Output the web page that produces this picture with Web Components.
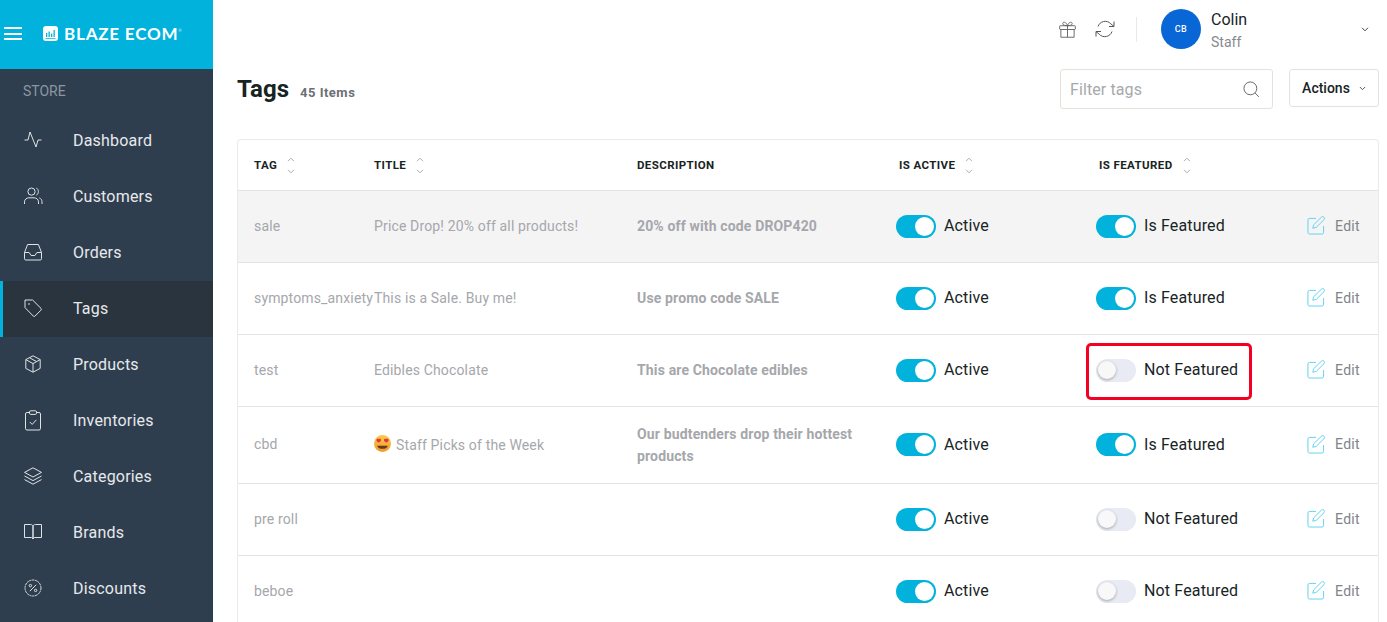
<!DOCTYPE html>
<html lang="en">
<head>
<meta charset="utf-8">
<title>Tags</title>
<style>
  html, body { margin: 0; height: 100%; overflow: hidden; background: #fff; font-family: Roboto, "Liberation Sans", sans-serif; }
</style>
</head>
<body>
<tags-app></tags-app>
<script>
  const ICONS = {
    activity: '<path d="M.5 9H4L6 1l6 15 2-7h3.500"/>',
    users: '<circle cx="7.500" cy="4.600" r="3.600"/><path d="M.5 17v-2.200c0-2.400 2.200-4 4.400-4h5.200c2.200 0 4.400 1.600 4.400 4V17"/><path d="M12.400 1.200c2.600.8 2.600 6 0 6.800M15.400 11c1.400.5 2.600 1.900 2.600 3.700V17"/>',
    inbox: '<path d="M.5 9.500 3.600 1.500h10.800l3.100 8v6.200a1.300 1.300 0 0 1-1.300 1.300H1.800a1.300 1.300 0 0 1-1.300-1.300z"/><path d="M.5 9.500h4.600l2 3h3.800l2-3h4.600"/>',
    tag: '<path d="M1 1h7.600l8.400 8.400a1.200 1.200 0 0 1 0 1.700l-6 6a1.200 1.200 0 0 1-1.700 0L1 8.600z" stroke-linejoin="round"/><circle cx="5" cy="5" r=".4"/>',
    box: '<path d="M9 .8 16.200 4.600v8.800L9 17.200 1.800 13.400V4.600z"/><path d="M1.800 4.600 9 8.600l7.200-4M9 8.600v8.600M5.400 2.700l7.200 3.900"/>',
    clip: '<path d="M5.500 2.500H3A1.500 1.500 0 0 0 1.500 4v14.500A1.500 1.500 0 0 0 3 20h12a1.500 1.500 0 0 0 1.500-1.500V4A1.500 1.500 0 0 0 15 2.500h-2.500"/><rect x="5.500" y=".8" width="7" height="3.600" rx="1.200"/><path d="m5.800 12 2.400 2.400 4.200-4.600"/>',
    layers: '<path d="M9 .8.500 5.400 9 10l8.500-4.600z"/><path d="M.5 9 9 13.600 17.500 9M.5 12.600 9 17.200l8.500-4.600"/>',
    book: '<path d="M.5 1.500h6.200c1.300 0 2.300 1 2.300 2.300V16c0-1-.8-1.500-1.700-1.500H.5zM17.500 1.500h-6.200C10 1.500 9 2.500 9 3.800V16c0-1 .8-1.500 1.700-1.500h6.800z"/>',
    percent: '<circle cx="9" cy="9" r="8" stroke-dasharray="2.200 .6"/><path d="m5.800 12.200 6.400-6.400"/><circle cx="6.400" cy="6.600" r="1.200"/><circle cx="11.600" cy="11.400" r="1.200"/>',
    gift: '<rect x=".7" y="5" width="16.600" height="4" rx=".6"/><path d="M2 9v8.200h14V9M9 5v12.200M9 5C7 5 4 4.600 4 2.800 4 .6 7.600.4 9 5zM9 5c2 0 5-.4 5-2.200C14 .6 10.400.4 9 5z"/>',
    refresh: '<path d="M19 1.500v5h-5M1 16.500v-5h5"/><path d="M3 6.500a7.600 7.600 0 0 1 12.800-2.700L19 6.500M1 11.500l3.200 2.700A7.600 7.600 0 0 0 17 11.500"/>',
    search: '<circle cx="7.800" cy="7.800" r="6.800"/><path d="m12.800 12.800 4 4"/>',
    edit: '<path d="M9.500 2.500H2.800A1.800 1.800 0 0 0 1 4.300v12.900A1.800 1.800 0 0 0 2.800 19h12.900a1.800 1.800 0 0 0 1.800-1.800v-6.700"/><path d="M15.200 1.200a1.900 1.900 0 0 1 2.700 2.700L9.700 12l-3.600.9.900-3.600z"/>'
  };
  const VIEWBOX = { clip: '0 0 18 21', refresh: '0 0 20 18', edit: '0 0 19 20' };

  class UiIcon extends HTMLElement {
    connectedCallback() {
      const name = this.getAttribute('name');
      const root = this.shadowRoot || this.attachShadow({ mode: 'open' });
      root.innerHTML = `
        <style>
          :host { display: inline-flex; flex: none; }
          svg { display: block; width: 100%; height: 100%; fill: none; stroke: currentColor; stroke-width: 1; overflow: visible; }
        </style>
        <svg viewBox="${VIEWBOX[name] || '0 0 18 18'}">${ICONS[name]}</svg>`;
    }
  }
  customElements.define('ui-icon', UiIcon);

  class SideItem extends HTMLElement {
    constructor() {
      super();
      this.attachShadow({ mode: 'open' }).innerHTML = `
        <style>
          :host { display: flex; align-items: center; height: 56px; padding: 0 0 2px 24px; box-sizing: border-box; color: #e6e9ec; font-size: 16px; letter-spacing: .2px; }
          :host([active]) { background: #2a343e; box-shadow: inset 3px 0 0 #00b2dc; }
          ui-icon { width: 18px; height: 18px; margin-right: 31px; color: #dfe3e6; }
          :host([icon="clip"]) ui-icon { height: 21px; }
        </style>
        <ui-icon></ui-icon><slot></slot>`;
    }
    connectedCallback() {
      const icon = this.shadowRoot.querySelector('ui-icon');
      icon.setAttribute('name', this.getAttribute('icon'));
      icon.connectedCallback();
    }
  }
  customElements.define('side-item', SideItem);

  class AppSidebar extends HTMLElement {
    constructor() {
      super();
      this.attachShadow({ mode: 'open' }).innerHTML = `
        <style>
          :host { display: block; width: 213px; flex: none; height: 100vh; background: #2f3e4e; overflow: hidden; }
          .brand { display: flex; align-items: center; height: 69px; background: #00b2dc; color: #fff; padding: 0 0 2px 4px; box-sizing: border-box; }
          .burger { width: 18px; height: 13px; border-top: 2px solid #fff; border-bottom: 2px solid #fff; position: relative; box-sizing: border-box; margin-right: 21px; }
          .burger::after { content: ''; position: absolute; left: 0; right: 0; top: 3.5px; height: 2px; background: #fff; }
          .logo { width: 15px; height: 15px; margin-right: 6px; }
          .name { font: 700 17px Lato, "Open Sans", sans-serif; letter-spacing: .8px; white-space: nowrap; }
          sup { font-size: 4px; vertical-align: 8px; font-weight: 400; }
          .label { height: 44px; box-sizing: border-box; padding: 15px 0 0 23px; font-size: 14px; line-height: 14px; color: #8b96a1; }
        </style>
        <div class="brand">
          <div class="burger"></div>
          <svg class="logo" viewBox="0 0 15 15"><rect width="15" height="15" rx="3" fill="#fff"/><path d="M3 7h1.300v4H3zM5.500 5.500h1.300V11H5.500zM8 7.500h1.300V11H8zM10.500 4h1.300v7h-1.300zM2.500 12h10v.8h-10z" fill="#00b2dc"/></svg>
          <span class="name">BLAZE ECOM<sup>®</sup></span>
        </div>
        <div class="label">STORE</div>
        <side-item icon="activity">Dashboard</side-item>
        <side-item icon="users">Customers</side-item>
        <side-item icon="inbox">Orders</side-item>
        <side-item icon="tag" active>Tags</side-item>
        <side-item icon="box">Products</side-item>
        <side-item icon="clip">Inventories</side-item>
        <side-item icon="layers">Categories</side-item>
        <side-item icon="book">Brands</side-item>
        <side-item icon="percent">Discounts</side-item>`;
    }
  }
  customElements.define('app-sidebar', AppSidebar);

  const chevron = (w = 8) => `<svg width="${w}" height="5" viewBox="0 0 8 5" fill="none" stroke="currentColor" stroke-width="1"><path d="m1 .8 3 3 3-3"/></svg>`;

  class TopBar extends HTMLElement {
    constructor() {
      super();
      this.attachShadow({ mode: 'open' }).innerHTML = `
        <style>
          :host { display: flex; align-items: center; height: 58px; color: #18241f; }
          .gift { width: 17px; height: 17px; margin: 0 19px 0 822px; color: #666; }
          .sync { width: 20px; height: 18px; color: #555; }
          .rule { width: 1px; height: 25px; background: #e6e9f0; margin: 0 24px 0 21px; }
          .avatar { width: 40px; height: 40px; border-radius: 50%; background: #0866d6; color: #fff; font-size: 9px; font-weight: 500; letter-spacing: .4px; display: flex; align-items: center; justify-content: center; margin-right: 10px; }
          .who { width: 150px; margin-top: 3px; }
          .name { font-size: 16px; line-height: 18px; margin-bottom: 5px; margin-top: -1px; }
          .role { font-size: 14px; line-height: 16px; color: #85898c; }
          .chev { color: #444; display: flex; }
        </style>
        <ui-icon class="gift" name="gift"></ui-icon>
        <ui-icon class="sync" name="refresh"></ui-icon>
        <div class="rule"></div>
        <div class="avatar">CB</div>
        <div class="who"><div class="name">Colin</div><div class="role">Staff</div></div>
        <div class="chev">${chevron()}</div>`;
    }
  }
  customElements.define('top-bar', TopBar);

  class PageHead extends HTMLElement {
    constructor() {
      super();
      this.attachShadow({ mode: 'open' }).innerHTML = `
        <style>
          :host { display: flex; align-items: flex-start; height: 81px; padding-top: 11px; box-sizing: border-box; color: #18241f; }
          h1 { margin: 0; font-size: 24px; line-height: 40px; font-weight: 700; }
          .count { font-size: 13px; font-weight: 700; color: #6c7075; letter-spacing: .5px; margin: 0 auto 0 11px; line-height: 47px; }
          .filter { width: 213px; height: 40px; box-sizing: border-box; border: 1px solid #e4e2da; border-radius: 3px; display: flex; align-items: center; justify-content: space-between; padding: 0 12px 0 9px; font-size: 16px; color: #a6a9ac; letter-spacing: .1px; }
          .filter ui-icon { width: 17px; height: 17px; color: #5d6266; }
          .actions { width: 90px; height: 38px; box-sizing: border-box; margin-left: 16px; border: 1px solid #e4e2da; border-radius: 3px; display: flex; align-items: center; justify-content: center; gap: 9px; font-size: 14px; font-weight: 500; }
          .actions span { display: flex; color: #444; }
        </style>
        <h1>Tags</h1>
        <div class="count">45 Items</div>
        <div class="filter">Filter tags<ui-icon name="search"></ui-icon></div>
        <div class="actions">Actions<span>${chevron(7)}</span></div>`;
    }
  }
  customElements.define('page-head', PageHead);

  class ToggleSwitch extends HTMLElement {
    constructor() {
      super();
      this.attachShadow({ mode: 'open' }).innerHTML = `
        <style>
          :host { display: inline-flex; align-items: center; gap: 8px; font-size: 16px; color: #18241f; letter-spacing: .15px; white-space: nowrap; position: relative; }
          .track { width: 40px; height: 23px; border-radius: 12px; background: #e8ebf3; display: flex; align-items: center; padding: 0 2px; box-sizing: border-box; }
          .knob { width: 18px; height: 18px; border-radius: 50%; background: #f8f8f9; box-shadow: 0 1px 3px rgba(0,0,0,.3); }
          :host([on]) .track { background: #00b2dc; justify-content: flex-end; }
          :host([on]) .knob { background: #fff; width: 19px; height: 19px; box-shadow: none; }
          .label { margin-top: var(--label-shift, -2px); }
          .mark { position: absolute; left: -10px; right: -14px; top: -16px; bottom: -18px; border: 3px solid #f40022; border-radius: 5px; display: none; }
          :host([marked]) .mark { display: block; }
        </style>
        <div class="track"><div class="knob"></div></div><span class="label"><slot></slot></span><div class="mark"></div>`;
    }
  }
  customElements.define('toggle-switch', ToggleSwitch);

  class EditLink extends HTMLElement {
    constructor() {
      super();
      this.attachShadow({ mode: 'open' }).innerHTML = `
        <style>
          :host { display: flex; align-items: center; gap: 10px; font-size: 14px; color: #808488; letter-spacing: .3px; }
          ui-icon { width: 18px; height: 19px; color: #5cd0f0; }
        </style>
        <ui-icon name="edit"></ui-icon><span>Edit</span>`;
    }
  }
  customElements.define('edit-link', EditLink);

  const COLUMNS = 'grid-template-columns: 120px 263px 260px 200px 210px 1fr;';

  class SortHead extends HTMLElement {
    constructor() {
      super();
      this.attachShadow({ mode: 'open' }).innerHTML = `
        <style>
          :host { display: flex; align-items: center; gap: 10px; font-size: 11.5px; font-weight: 700; color: #18241f; letter-spacing: .4px; }
          .sort { display: flex; flex-direction: column; gap: 7px; color: #a9acaf; }
          .sort svg { display: block; }
          .sort svg:first-child { transform: scaleY(-1); }
        </style>
        <slot></slot><div class="sort">${chevron()}${chevron()}</div>`;
    }
  }
  customElements.define('sort-head', SortHead);

  class TagRow extends HTMLElement {
    set data(d) {
      const root = this.attachShadow({ mode: 'open' });
      const emoji = d.emoji ? `<svg class="emoji" viewBox="0 0 16 16"><defs><linearGradient id="face" x1="0" y1="0" x2="0" y2="1"><stop offset="0" stop-color="#fbc94c"/><stop offset="1" stop-color="#ee9a2e"/></linearGradient></defs><circle cx="8" cy="8" r="8" fill="url(#face)"/><path d="M3 10c1 4 9 4 10 0z" fill="#6b3a1e"/><path d="M4.600 4c1-1 1.700-.2 2 .4.300 1.200-1.400 2.200-2.200 2.700-.8-.5-2.500-1.500-2.100-2.700.3-.7 1.300-1.300 2.300-.4zM11.400 4c1-1 2-.3 2.300.4.400 1.200-1.300 2.200-2.100 2.700-.8-.5-2.500-1.500-2.200-2.700.3-.6 1-1.400 2-.4z" fill="#e8323c"/></svg>` : '';
      root.innerHTML = `
        <style>
          :host { display: grid; ${COLUMNS} align-items: center; min-height: 71px; border-top: 1px solid #e3e4e7; font-size: 14px; color: #a5a7ab; letter-spacing: .15px; padding-left: 16px; }
          :host([shaded]) { background: #f4f4f5; }
          :host([tall]) { min-height: 76px; --label-shift: 0; }
          .up { margin-top: -2px; }
          .desc { font-weight: 700; line-height: 22px; padding-right: 20px; }
          :host([tall]) .desc { margin-top: 0; }
          .emoji { width: 17px; height: 17px; vertical-align: -2px; margin-right: 5px; }
          .tag { white-space: nowrap; }
          .sw { margin-left: -1px; }
        </style>
        <div class="tag up">${d.tag}</div>
        <div class="up">${emoji}${d.title}</div>
        <div class="desc up">${d.desc}</div>
        <div class="sw"><toggle-switch on>Active</toggle-switch></div>
        <div class="sw"><toggle-switch ${d.featured ? 'on' : ''} ${d.marked ? 'marked' : ''}>${d.featured ? 'Is Featured' : 'Not Featured'}</toggle-switch></div>
        <edit-link class="up"></edit-link>`;
      if (d.tall) this.setAttribute('tall', '');
      if (d.shaded) this.setAttribute('shaded', '');
    }
  }
  customElements.define('tag-row', TagRow);

  class TagsTable extends HTMLElement {
    constructor() {
      super();
      this.attachShadow({ mode: 'open' }).innerHTML = `
        <style>
          :host { display: block; border: 1px solid #e9eaec; border-bottom: 0; border-radius: 4px 4px 0 0; }
          .head { display: grid; ${COLUMNS} align-items: center; height: 50px; padding-left: 16px; }
          .head sort-head:nth-child(4), .head sort-head:nth-child(5) { margin-left: 2px; }
          .plain { font-size: 11.5px; font-weight: 700; color: #18241f; letter-spacing: .4px; }
        </style>
        <div class="head">
          <sort-head>TAG</sort-head>
          <sort-head>TITLE</sort-head>
          <div class="plain">DESCRIPTION</div>
          <sort-head>IS ACTIVE</sort-head>
          <sort-head>IS FEATURED</sort-head>
        </div>`;
      const rows = [
        { tag: 'sale', title: 'Price Drop! 20% off all products!', desc: '20% off with code DROP420', featured: true, shaded: true },
        { tag: 'symptoms_anxiety', title: 'This is a Sale. Buy me!', desc: 'Use promo code SALE', featured: true },
        { tag: 'test', title: 'Edibles Chocolate', desc: 'This are Chocolate edibles', marked: true },
        { tag: 'cbd', title: 'Staff Picks of the Week', emoji: true, desc: 'Our budtenders drop their hottest products', featured: true, tall: true },
        { tag: 'pre roll', title: '', desc: '' },
        { tag: 'beboe', title: '', desc: '' }
      ];
      for (const d of rows) {
        const row = document.createElement('tag-row');
        row.data = d;
        this.shadowRoot.appendChild(row);
      }
    }
  }
  customElements.define('tags-table', TagsTable);

  class TagsApp extends HTMLElement {
    constructor() {
      super();
      this.attachShadow({ mode: 'open' }).innerHTML = `
        <style>
          :host { display: flex; height: 100vh; overflow: hidden; font-family: Roboto, "Liberation Sans", sans-serif; }
          main { flex: 1; min-width: 0; padding: 0 8px 0 24px; }
        </style>
        <app-sidebar></app-sidebar>
        <main>
          <top-bar></top-bar>
          <page-head></page-head>
          <tags-table></tags-table>
        </main>`;
    }
  }
  customElements.define('tags-app', TagsApp);
</script>
</body>
</html>
